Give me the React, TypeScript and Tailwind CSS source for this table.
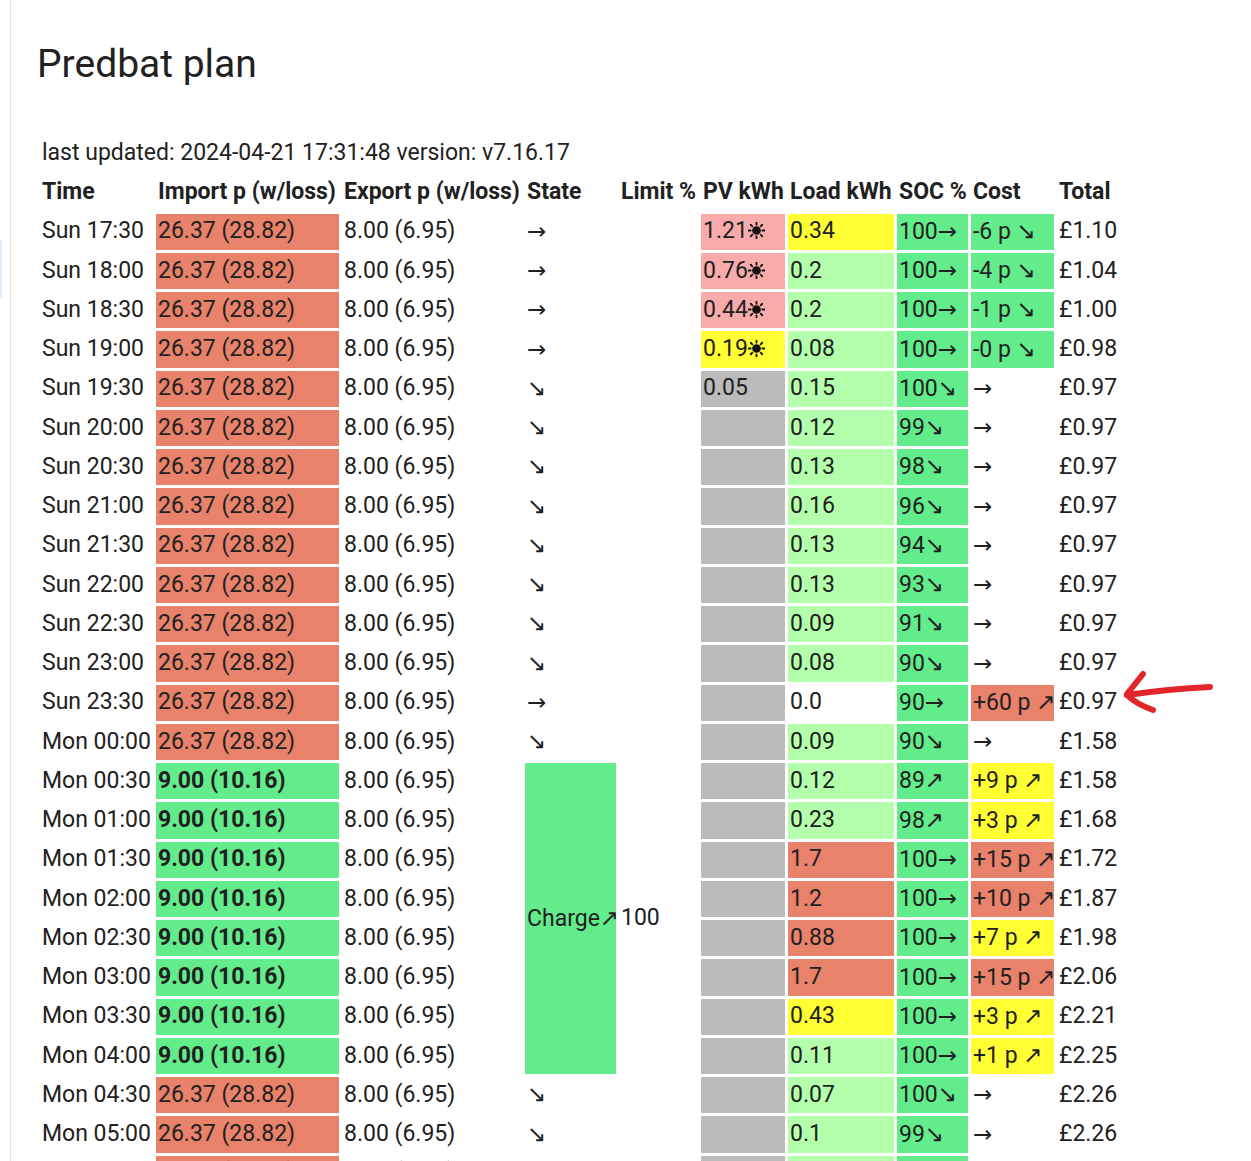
import React from 'react';

const BG = {
  red: 'bg-[#E9826A]',
  green: 'bg-[#63EC8B]',
  lime: 'bg-[#B4FFAC]',
  pink: 'bg-[#F9AAAA]',
  yellow: 'bg-[#FFFF33]',
  grey: 'bg-[#BBBBBB]',
  white: 'bg-white',
  none: '',
};

type Tone = keyof typeof BG;

type Row = {
  time: string;
  cheap?: boolean;
  state?: string; // undefined while the Charge block spans the row
  pv: [string, Tone];
  load: [string, Tone];
  soc: string;
  cost: [string, Tone];
  total: string;
};

const rows: Row[] = [
  { time: 'Sun 17:30', state: '→', pv: ['1.21☀', 'pink'], load: ['0.34', 'yellow'], soc: '100→', cost: ['-6 p ↘', 'green'], total: '£1.10' },
  { time: 'Sun 18:00', state: '→', pv: ['0.76☀', 'pink'], load: ['0.2', 'lime'], soc: '100→', cost: ['-4 p ↘', 'green'], total: '£1.04' },
  { time: 'Sun 18:30', state: '→', pv: ['0.44☀', 'pink'], load: ['0.2', 'lime'], soc: '100→', cost: ['-1 p ↘', 'green'], total: '£1.00' },
  { time: 'Sun 19:00', state: '→', pv: ['0.19☀', 'yellow'], load: ['0.08', 'lime'], soc: '100→', cost: ['-0 p ↘', 'green'], total: '£0.98' },
  { time: 'Sun 19:30', state: '↘', pv: ['0.05', 'grey'], load: ['0.15', 'lime'], soc: '100↘', cost: ['→', 'none'], total: '£0.97' },
  { time: 'Sun 20:00', state: '↘', pv: ['', 'grey'], load: ['0.12', 'lime'], soc: '99↘', cost: ['→', 'none'], total: '£0.97' },
  { time: 'Sun 20:30', state: '↘', pv: ['', 'grey'], load: ['0.13', 'lime'], soc: '98↘', cost: ['→', 'none'], total: '£0.97' },
  { time: 'Sun 21:00', state: '↘', pv: ['', 'grey'], load: ['0.16', 'lime'], soc: '96↘', cost: ['→', 'none'], total: '£0.97' },
  { time: 'Sun 21:30', state: '↘', pv: ['', 'grey'], load: ['0.13', 'lime'], soc: '94↘', cost: ['→', 'none'], total: '£0.97' },
  { time: 'Sun 22:00', state: '↘', pv: ['', 'grey'], load: ['0.13', 'lime'], soc: '93↘', cost: ['→', 'none'], total: '£0.97' },
  { time: 'Sun 22:30', state: '↘', pv: ['', 'grey'], load: ['0.09', 'lime'], soc: '91↘', cost: ['→', 'none'], total: '£0.97' },
  { time: 'Sun 23:00', state: '↘', pv: ['', 'grey'], load: ['0.08', 'lime'], soc: '90↘', cost: ['→', 'none'], total: '£0.97' },
  { time: 'Sun 23:30', state: '→', pv: ['', 'grey'], load: ['0.0', 'white'], soc: '90→', cost: ['+60 p ↗', 'red'], total: '£0.97' },
  { time: 'Mon 00:00', state: '↘', pv: ['', 'grey'], load: ['0.09', 'lime'], soc: '90↘', cost: ['→', 'none'], total: '£1.58' },
  { time: 'Mon 00:30', cheap: true, pv: ['', 'grey'], load: ['0.12', 'lime'], soc: '89↗', cost: ['+9 p ↗', 'yellow'], total: '£1.58' },
  { time: 'Mon 01:00', cheap: true, pv: ['', 'grey'], load: ['0.23', 'lime'], soc: '98↗', cost: ['+3 p ↗', 'yellow'], total: '£1.68' },
  { time: 'Mon 01:30', cheap: true, pv: ['', 'grey'], load: ['1.7', 'red'], soc: '100→', cost: ['+15 p ↗', 'red'], total: '£1.72' },
  { time: 'Mon 02:00', cheap: true, pv: ['', 'grey'], load: ['1.2', 'red'], soc: '100→', cost: ['+10 p ↗', 'red'], total: '£1.87' },
  { time: 'Mon 02:30', cheap: true, pv: ['', 'grey'], load: ['0.88', 'red'], soc: '100→', cost: ['+7 p ↗', 'yellow'], total: '£1.98' },
  { time: 'Mon 03:00', cheap: true, pv: ['', 'grey'], load: ['1.7', 'red'], soc: '100→', cost: ['+15 p ↗', 'red'], total: '£2.06' },
  { time: 'Mon 03:30', cheap: true, pv: ['', 'grey'], load: ['0.43', 'yellow'], soc: '100→', cost: ['+3 p ↗', 'yellow'], total: '£2.21' },
  { time: 'Mon 04:00', cheap: true, pv: ['', 'grey'], load: ['0.11', 'lime'], soc: '100→', cost: ['+1 p ↗', 'yellow'], total: '£2.25' },
  { time: 'Mon 04:30', state: '↘', pv: ['', 'grey'], load: ['0.07', 'lime'], soc: '100↘', cost: ['→', 'none'], total: '£2.26' },
  { time: 'Mon 05:00', state: '↘', pv: ['', 'grey'], load: ['0.1', 'lime'], soc: '99↘', cost: ['→', 'none'], total: '£2.26' },
  { time: 'Mon 05:30', state: '↘', pv: ['', 'grey'], load: ['0.1', 'lime'], soc: '98↘', cost: ['→', 'none'], total: '£2.26' },
  { time: 'Mon 06:00', state: '↘', pv: ['', 'grey'], load: ['0.1', 'lime'], soc: '97↘', cost: ['→', 'none'], total: '£2.26' },
];

const headers = ['Time', 'Import p (w/loss)', 'Export p (w/loss)', 'State', 'Limit %', 'PV kWh', 'Load kWh', 'SOC %', 'Cost', 'Total'];
const colWidths = ['w-[113px]', 'w-[183px]', 'w-[180px]', 'w-[91px]', 'w-[79px]', 'w-[84px]', 'w-[106px]', 'w-[71px]', 'w-[83px]', 'w-[62px]'];

const cell = 'h-[36.26px] px-[2px] py-0 text-left align-middle whitespace-nowrap';

// black sun with rays, drawn so it keeps the heavy look of the original glyph
function Sun() {
  const rays = [0, 45, 90, 135, 180, 225, 270, 315];
  return (
    <svg className="inline-block align-[-1px]" width="17" height="17" viewBox="0 0 18 18" aria-label="☀">
      <circle cx="9" cy="9" r="4.6" fill="#111" />
      {rays.map((a) => {
        const r = (a * Math.PI) / 180;
        return (
          <line
            key={a}
            x1={9 + Math.cos(r) * 6.2}
            y1={9 + Math.sin(r) * 6.2}
            x2={9 + Math.cos(r) * 8.6}
            y2={9 + Math.sin(r) * 8.6}
            stroke="#111"
            strokeWidth="1.9"
            strokeLinecap="round"
          />
        );
      })}
    </svg>
  );
}

// arrows come from DejaVu, as in the original page
const SYMBOL = /([→↘↗☀])/;

function Txt({ s }: { s: string }) {
  return (
    <>
      {s.split(SYMBOL).map((part, i) => {
        if (part === '☀') return <Sun key={i} />;
        if (part.length === 1 && SYMBOL.test(part))
          return (
            <span key={i} className="font-['DejaVu_Sans',sans-serif]">
              {part}
            </span>
          );
        return part;
      })}
    </>
  );
}

export default function App() {
  return (
    <div className="relative flex min-h-screen bg-white text-[#212121] font-['Roboto','DejaVu_Sans',sans-serif]">
      {/* sidebar edge */}
      <div className="w-[10px] shrink-0">
        <div className="mt-[240px] h-[58px] w-[2px] bg-[#dcedfc]" />
      </div>

      <div className="flex-1 border-l border-[#e0e0e0] pl-[26px] pt-[42px]">
        <h1 className="mb-[45px] text-[39px] leading-[45px] font-normal">Predbat plan</h1>

        <table className="w-[1085px] table-fixed border-separate border-spacing-[3px] text-[23px]">
          <colgroup>
            {colWidths.map((w, i) => (
              <col key={i} className={w} />
            ))}
          </colgroup>
          <tbody>
            <tr>
              <td colSpan={10} className={cell}>
                last updated: 2024-04-21 17:31:48 version: v7.16.17
              </td>
            </tr>
            <tr>
              {headers.map((h) => (
                <th key={h} className={`${cell} font-bold`}>
                  {h}
                </th>
              ))}
            </tr>
            {rows.map((r, i) => (
              <tr key={r.time}>
                <td className={cell}>{r.time}</td>
                {r.cheap ? (
                  <td className={`${cell} ${BG.green} font-bold`}>9.00 (10.16)</td>
                ) : (
                  <td className={`${cell} ${BG.red}`}>26.37 (28.82)</td>
                )}
                <td className={cell}>8.00 (6.95)</td>
                {i === 14 && (
                  <>
                    <td rowSpan={8} className={`px-[2px] text-left align-middle whitespace-nowrap ${BG.green}`}>
                      <Txt s="Charge↗" />
                    </td>
                    <td rowSpan={8} className="px-[2px] text-left align-middle whitespace-nowrap">
                      100
                    </td>
                  </>
                )}
                {r.state !== undefined && (
                  <>
                    <td className={cell}>
                      <Txt s={r.state} />
                    </td>
                    <td className={cell} />
                  </>
                )}
                <td className={`${cell} ${BG[r.pv[1]]}`}>
                  <Txt s={r.pv[0]} />
                </td>
                <td className={`${cell} ${BG[r.load[1]]}`}>{r.load[0]}</td>
                <td className={`${cell} ${BG.green}`}>
                  <Txt s={r.soc} />
                </td>
                <td className={`${cell} ${BG[r.cost[1]]}`}>
                  <Txt s={r.cost[0]} />
                </td>
                <td className={cell}>{r.total}</td>
              </tr>
            ))}
          </tbody>
        </table>
      </div>

      {/* hand-drawn annotation */}
      <svg
        className="absolute left-[1118px] top-[664px]"
        width="100"
        height="54"
        viewBox="0 0 100 54"
        fill="none"
        stroke="#E3262A"
        strokeWidth="6"
        strokeLinecap="round"
        strokeLinejoin="round"
      >
        <path d="M92 23 Q50 25 9 31" />
        <path d="M25 10 L9 30" />
        <path d="M9 31 Q18 40 35 46" />
      </svg>
    </div>
  );
}
